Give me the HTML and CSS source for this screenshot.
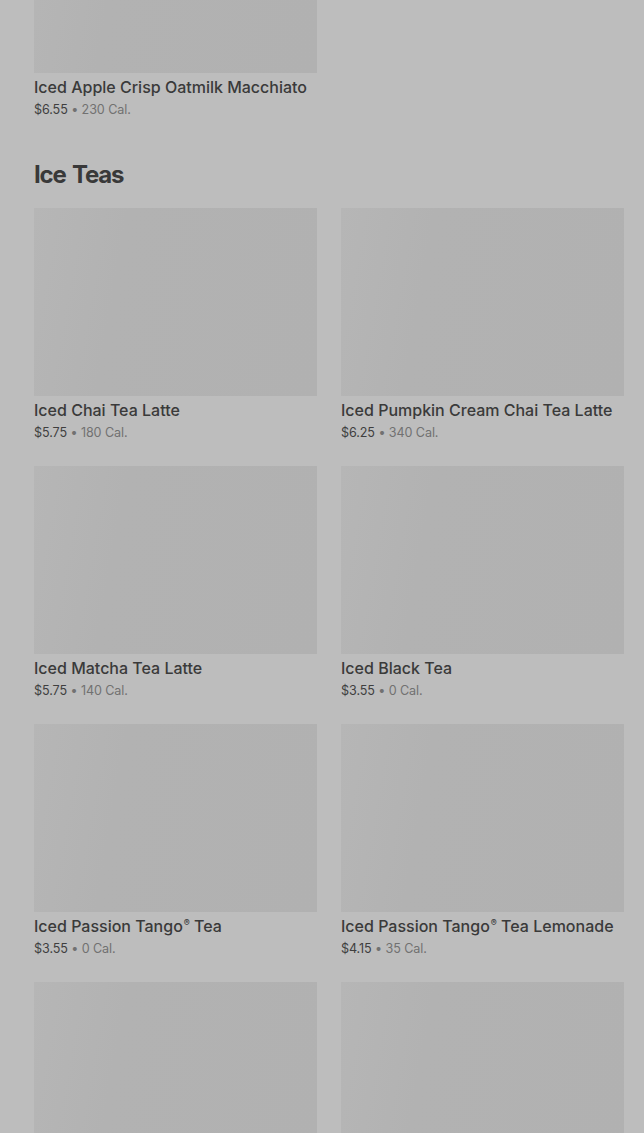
FILE: index.html
```html
<!DOCTYPE html>
<html lang="en">
<head>
    <meta charset="UTF-8">
    <meta name="viewport" content="width=device-width, initial-scale=1.0">
    <title>Menu</title>
    <link rel="stylesheet" href="styles.css">
</head>
<body>
    <div class="menu">

        <!-- previous section, scrolled out -->
        <section class="section first">
            <div class="grid">
                <div class="item">
                    <div class="photo"></div>
                    <div class="name">Iced Apple Crisp Oatmilk Macchiato</div>
                    <div class="meta"><span class="price">$6.55</span> • 230 Cal.</div>
                </div>
            </div>
        </section>

        <!-- Ice Teas -->
        <section class="section">
            <h2>Ice Teas</h2>
            <div class="grid">
                <div class="item">
                    <div class="photo"></div>
                    <div class="name">Iced Chai Tea Latte</div>
                    <div class="meta"><span class="price">$5.75</span> • 180 Cal.</div>
                </div>
                <div class="item">
                    <div class="photo"></div>
                    <div class="name">Iced Pumpkin Cream Chai Tea Latte</div>
                    <div class="meta"><span class="price">$6.25</span> • 340 Cal.</div>
                </div>
                <div class="item">
                    <div class="photo"></div>
                    <div class="name">Iced Matcha Tea Latte</div>
                    <div class="meta"><span class="price">$5.75</span> • 140 Cal.</div>
                </div>
                <div class="item">
                    <div class="photo"></div>
                    <div class="name">Iced Black Tea</div>
                    <div class="meta"><span class="price">$3.55</span> • 0 Cal.</div>
                </div>
                <div class="item">
                    <div class="photo"></div>
                    <div class="name">Iced Passion Tango<sup>®</sup> Tea</div>
                    <div class="meta"><span class="price">$3.55</span> • 0 Cal.</div>
                </div>
                <div class="item">
                    <div class="photo"></div>
                    <div class="name">Iced Passion Tango<sup>®</sup> Tea Lemonade</div>
                    <div class="meta"><span class="price">$4.15</span> • 35 Cal.</div>
                </div>
                <!-- next row, only the photos are on screen -->
                <div class="item">
                    <div class="photo"></div>
                </div>
                <div class="item">
                    <div class="photo"></div>
                </div>
            </div>
        </section>

    </div>
</body>
</html>
```

FILE: styles.css
```css
html, body {
    margin: 0;
    height: 100%;
    overflow: hidden;
}

body {
    background-color: #bdbdbd;
    font-family: Inter, "Liberation Sans", sans-serif;
    color: #3b3b3b;
}

.menu {
    padding: 0 20px 0 34px;
    margin-top: -115px;
}

.section {
    margin-bottom: 40px;
}

.section h2 {
    font-size: 24px;
    font-weight: 700;
    letter-spacing: -1.2px;
    word-spacing: 2px;
    line-height: 30px;
    margin: 0 0 18px 0;
    color: #393939;
}

.grid {
    display: grid;
    grid-template-columns: 283px 283px;
    column-gap: 24px;
    row-gap: 23px;
}

.photo {
    height: 188px;
    background: linear-gradient(100deg, #b6b6b6 0%, #b2b2b2 30%, #b1b1b1 100%);
}

.name {
    margin-top: 3px;
    height: 22px;
    font-size: 16px;
    font-weight: 500;
    line-height: 22px;
    white-space: nowrap;
    color: #3a3a3a;
}

.name sup {
    font-size: 9px;
    line-height: 0;
    vertical-align: 6px;
    margin-left: 1px;
}

.meta {
    padding-top: 1px;
    font-size: 12.6px;
    letter-spacing: -0.1px;
    line-height: 21px;
    color: #717171;
}

.price {
    color: #3f3f3f;
}
```
